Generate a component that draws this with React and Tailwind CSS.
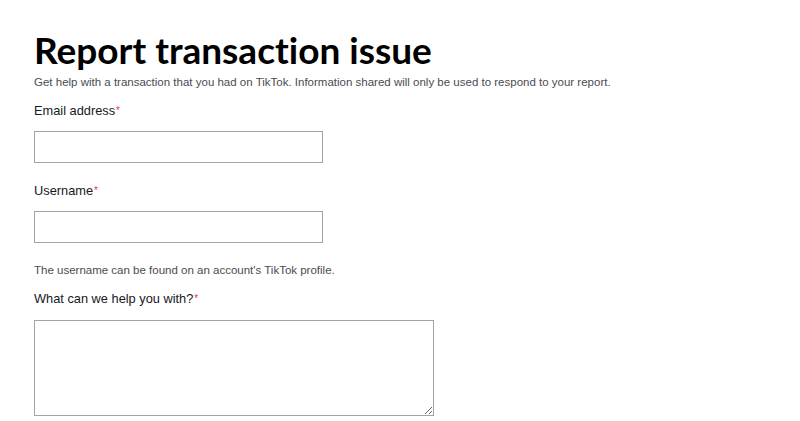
import React from 'react';

const Label = ({ children }) => (
    <label className="block text-[12.8px] leading-4 text-[#161823]">
        {children}
        <span className="text-[#fe2c55] text-[10px] align-top ml-[1px]">*</span>
    </label>
);

const App = () => {
    return (
        <div className="min-h-screen bg-white font-['Liberation_Sans',Arial,sans-serif] overflow-hidden">
            <div className="pl-[34px] pt-[30px]">
                <h1 className="text-[37px] leading-[40px] font-bold text-black font-['Lato',sans-serif] [font-variant-ligatures:none]">
                    Report transaction issue
                </h1>
                <p className="mt-[5px] text-[11.5px] leading-[14px] text-[#4a4b52]">
                    Get help with a transaction that you had on TikTok. Information shared will only be used to respond to your report.
                </p>

                <div className="mt-[14px]">
                    <Label>Email address</Label>
                    <input type="text" className="mt-[12px] block w-[289px] h-[32px] border border-[#a3a3a8] bg-white outline-none px-2 text-sm" />
                </div>

                <div className="mt-[20px]">
                    <Label>Username</Label>
                    <input type="text" className="mt-[12px] block w-[289px] h-[32px] border border-[#a3a3a8] bg-white outline-none px-2 text-sm" />
                    <p className="mt-[20px] text-[11.5px] leading-[14px] text-[#4a4b52]">
                        The username can be found on an account's TikTok profile.
                    </p>
                </div>

                <div className="mt-[14px]">
                    <Label>What can we help you with?</Label>
                    <textarea className="mt-[13px] block w-[400px] h-[96px] border border-[#a3a3a8] bg-white outline-none p-2 text-sm" />
                </div>
            </div>
        </div>
    );
};

export default App;
